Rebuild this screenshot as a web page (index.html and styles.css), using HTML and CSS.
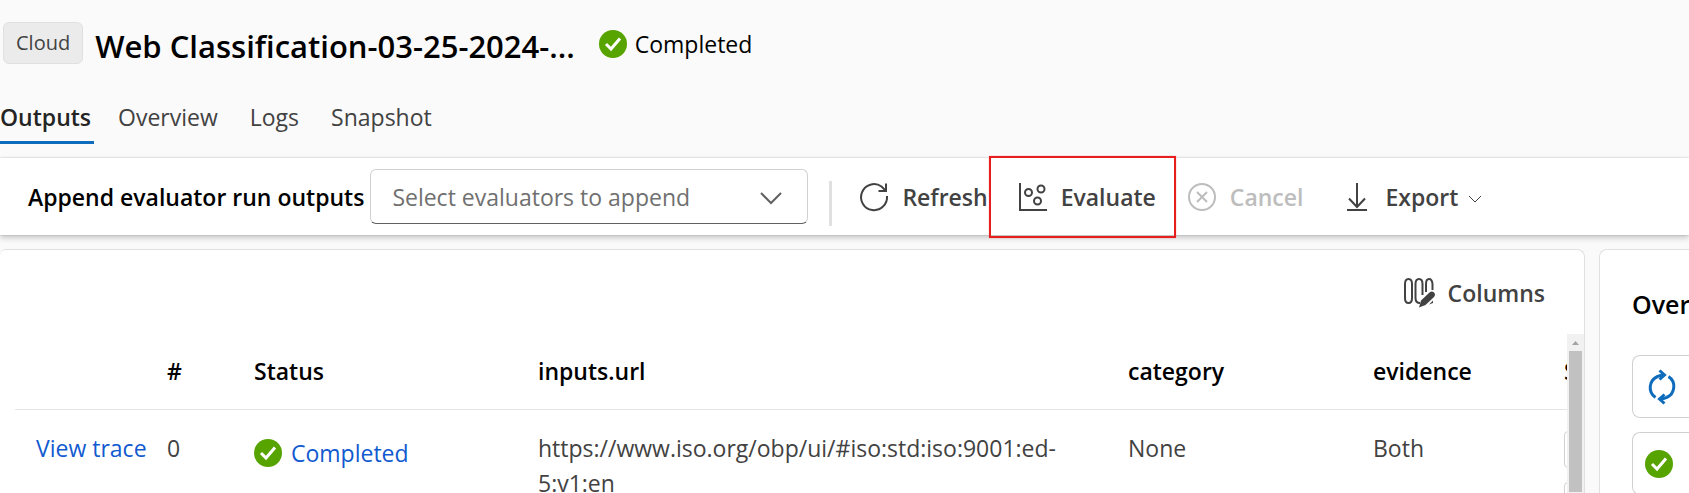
FILE: index.html
```html
<!DOCTYPE html>
<html lang="en">
<head>
<meta charset="utf-8">
<title>Web Classification run</title>
<link rel="stylesheet" href="styles.css">
</head>
<body>
<svg class="sprite" aria-hidden="true">
  <symbol id="check" viewBox="0 0 28 28">
    <circle cx="14" cy="14" r="14" fill="#57a300"/>
    <path d="M7 14 12 19 21 8.500" fill="none" stroke="#fff" stroke-width="3"/>
  </symbol>
</svg>
<div class="page">
  <header class="header">
    <span class="badge">Cloud</span>
    <h1 class="title">Web Classification-03-25-2024-...</h1>
    <span class="run-status"><svg class="icon-check"><use href="#check"/></svg>Completed</span>
  </header>

  <nav class="tabs">
    <a class="tab tab-active" href="#outputs">Outputs</a>
    <a class="tab" href="#overview">Overview</a>
    <a class="tab" href="#logs">Logs</a>
    <a class="tab" href="#snapshot">Snapshot</a>
  </nav>

  <section class="toolbar">
    <label class="toolbar-label" for="evaluators">Append evaluator run outputs</label>
    <div class="select-wrap">
      <select class="select" id="evaluators"><option>Select evaluators to append</option></select>
      <svg class="select-chevron" viewBox="0 0 22 12"><path d="M1 1 11 11 21 1"/></svg>
    </div>
    <span class="divider"></span>
    <button class="command command-refresh" type="button">
      <svg class="icon" viewBox="0 0 28 28"><path d="M27 13A13 13 0 1 1 21.500 3.500L26 8M26 .5V8H18.500"/></svg>Refresh
    </button>
    <button class="command command-evaluate" type="button">
      <svg class="icon" viewBox="0 0 28 28"><path d="M1 0V27H28"/><circle cx="9.500" cy="9.500" r="3.500"/><circle cx="22" cy="6" r="3.500"/><circle cx="18.500" cy="18" r="3.500"/></svg>Evaluate
    </button>
    <button class="command command-cancel" type="button" disabled>
      <svg class="icon" viewBox="0 0 28 28"><circle cx="14" cy="14" r="13"/><path d="M9 9 19 19M19 9 9 19"/></svg>Cancel
    </button>
    <button class="command command-export" type="button">
      <svg class="icon" viewBox="0 0 28 28"><path d="M14 0V24M6 15.500 14 24 22 15.500M4 27H24"/></svg>Export
      <svg class="icon-caret" viewBox="0 0 14 8"><path d="M1 1 7 7 13 1"/></svg>
    </button>
  </section>

  <main class="content">
    <section class="card results">
      <div class="results-tools">
        <button class="command" type="button">
          <svg class="icon-columns" viewBox="0 0 30 30">
            <path d="M1 6Q1 1 4.500 1T8 6V20Q8 25 4.500 25T1 20ZM16 25Q11.500 25 11.500 20V6Q11.500 1 15 1T18.500 6V17M22 14V6Q22 1 25 1T28.500 6V12"/>
            <path class="pen" d="M15 29.500 17 22.500 25.500 14.500Q28 12.500 30 14.500T30 19L21.500 27ZM25 26.500 29 22.500V25Z"/>
          </svg>Columns
        </button>
      </div>
      <div class="results-scroll">
        <div class="table-view">
          <table class="table">
            <colgroup>
              <col class="col-trace"><col class="col-index"><col class="col-status"><col><col class="col-category"><col class="col-evidence"><col class="col-score">
            </colgroup>
            <thead>
              <tr><th></th><th>#</th><th>Status</th><th>inputs.url</th><th>category</th><th>evidence</th><th>S</th></tr>
            </thead>
            <tbody>
              <tr>
                <td class="cell-trace"><a class="link" href="#trace">View trace</a></td>
                <td>0</td>
                <td><a class="link link-status" href="#status"><svg class="icon-check"><use href="#check"/></svg>Completed</a></td>
                <td>https://www.iso.org/obp/ui/#iso:std:iso:9001:ed-<wbr>5:v1:en</td>
                <td>None</td>
                <td>Both</td>
                <td class="cell-chips"><span class="chip"></span><span class="chip"></span></td>
              </tr>
            </tbody>
          </table>
        </div>
        <div class="scrollbar">
          <svg class="scroll-arrow" viewBox="0 0 17 17"><path d="M5 11 8.500 7 12 11Z"/></svg>
          <div class="scroll-thumb"></div>
        </div>
      </div>
    </section>

    <aside class="card side">
      <h2 class="side-title">Overview</h2>
      <div class="tile">
        <svg class="icon-sync" viewBox="0 0 28 34"><path d="M7.500 27.500A12 12 0 0 1 9.500 6.500Q12 5 16 5M20.500 6.500A12 12 0 0 1 18.500 27.500Q16 29 12 29M11.500 .5 16.500 5 11.500 9.500M16.500 24.500 11.500 29 16.500 33.500"/></svg>
      </div>
      <div class="tile"><svg class="icon-check"><use href="#check"/></svg></div>
    </aside>
  </main>
</div>
</body>
</html>
```

FILE: styles.css
```css
* { box-sizing: border-box; }

body {
  margin: 0;
  background: #fafafa;
  color: #000;
  font: 23px/32px "Open Sans", "Noto Sans", sans-serif;
}

.sprite { display: none; }

.page {
  display: flex;
  flex-direction: column;
  height: 100vh;
  overflow: hidden;
}

svg { display: block; flex: none; overflow: visible; }

.header {
  display: flex;
  align-items: flex-start;
  padding: 22px 3px 0;
}

.badge {
  padding: 4px 12px;
  border: 1px solid #e0e0e0;
  border-radius: 6px;
  background: #ebebeb;
  color: #424242;
  font-size: 20px;
}

.title {
  margin: 3px 24px 0 12px;
  font-size: 31px;
  font-weight: 600;
  line-height: 42px;
  white-space: nowrap;
}

.run-status {
  display: flex;
  align-items: center;
  gap: 8px;
  margin-top: 6px;
}

.icon-check { width: 28px; height: 28px; }

.tabs {
  display: flex;
  gap: 32px;
  margin-top: 34px;
}

.tab {
  padding-bottom: 8px;
  border-bottom: 3px solid transparent;
  color: #424242;
  text-decoration: none;
}

.tab-active {
  margin-right: -8px;
  padding-right: 3px;
  border-color: #0f6cbd;
  color: #242424;
  font-weight: 600;
}

.toolbar {
  display: flex;
  align-items: center;
  margin-top: 14px;
  padding-left: 28px;
  height: 77px;
  flex: none;
  background: #fff;
  box-shadow: 0 0 2px rgba(0, 0, 0, .2), 0 3px 6px rgba(0, 0, 0, .2);
}

.toolbar-label {
  font-weight: 600;
  white-space: nowrap;
}

.select-wrap {
  position: relative;
  width: 438px;
  margin-left: 6px;
}

.select {
  appearance: none;
  display: block;
  width: 100%;
  height: 55px;
  padding: 0 60px 0 21px;
  border: 1px solid #d1d1d1;
  border-bottom-color: #616161;
  border-radius: 6px;
  background: #fff;
  color: #707070;
  font: inherit;
}

.select-chevron {
  position: absolute;
  top: 23px;
  right: 26px;
  width: 22px;
  height: 12px;
  fill: none;
  stroke: #616161;
  stroke-width: 2;
  pointer-events: none;
}

.divider {
  align-self: flex-end;
  width: 3px;
  height: 45px;
  margin: 0 28px 9px 21px;
  background: #e0e0e0;
}

.command {
  position: relative;
  display: flex;
  align-items: center;
  gap: 14px;
  padding: 0;
  border: 0;
  background: none;
  color: #424242;
  font: inherit;
  font-weight: 600;
  white-space: nowrap;
}

.icon, .icon-caret, .icon-columns {
  fill: none;
  stroke: currentColor;
  stroke-width: 2;
}

.icon { width: 28px; height: 28px; }
.icon-caret { width: 14px; height: 8px; stroke-width: 1; margin-left: -4px; margin-top: 4px; }
.icon-columns { width: 30px; height: 30px; }
.pen { fill: currentColor; stroke: none; }

.command-evaluate {
  align-self: stretch;
  margin-left: 1px;
  padding: 0 20px 0 30px;
}

.command-evaluate::after {
  content: "";
  position: absolute;
  inset: -2px 0 -3px;
  border: 2px solid #e61e1e;
  box-shadow: 0 0 1px #f08080;
}

.command-cancel { margin-left: 12px; color: #bdbdbd; }
.command-export { margin-left: 40px; }

.content {
  display: flex;
  gap: 14px;
  flex: 1;
  min-height: 0;
  margin-top: 14px;
}

.card {
  border: 1px solid #e0e0e0;
  border-bottom: 0;
  background: #fff;
}

.results {
  display: flex;
  flex-direction: column;
  flex: 1;
  min-width: 0;
  border-left: 0;
  border-radius: 6px 8px 0 0;
}

.results-tools {
  display: flex;
  justify-content: flex-end;
  padding: 27px 39px 0 0;
}

.results-scroll {
  display: flex;
  flex: 1;
  min-height: 0;
  margin-top: 25px;
  padding-left: 15px;
}

.table-view {
  flex: 1;
  min-width: 0;
  overflow: hidden;
}

.table {
  width: 100%;
  table-layout: fixed;
  border-collapse: collapse;
  line-height: 35px;
}

.col-trace { width: 152px; }
.col-index { width: 87px; }
.col-status { width: 284px; }
.col-category { width: 245px; }
.col-evidence { width: 191px; }
.col-score { width: 3px; }

.table th {
  height: 75px;
  padding: 0;
  border-bottom: 1px solid #e5e5e5;
  font-weight: 600;
  text-align: left;
}

.table td {
  padding: 21px 0 0;
  color: #424242;
  vertical-align: top;
}

.table .cell-trace { padding-left: 21px; }

.link { color: #115ad0; text-decoration: none; }

.link-status {
  display: flex;
  align-items: center;
  gap: 9px;
  margin-top: 5px;
}

.chip {
  display: block;
  width: 60px;
  height: 37px;
  margin-bottom: 14px;
  border: 1px solid #d1d1d1;
  border-radius: 4px;
}

.scrollbar {
  display: flex;
  flex-direction: column;
  align-items: center;
  width: 17px;
  background: #f1f1f1;
}

.scroll-arrow { width: 17px; height: 17px; fill: #a3a3a3; }

.scroll-thumb {
  flex: 1;
  width: 13px;
  margin-bottom: 1px;
  background: #c1c1c1;
}

.side {
  flex: 0 0 90px;
  padding: 36px 0 0 32px;
  overflow: hidden;
  border-right: 0;
  border-radius: 8px 0 0 0;
}

.side-title {
  margin: 0 0 33px;
  font-size: 25px;
  font-weight: 600;
  line-height: 36px;
}

.tile {
  display: flex;
  align-items: center;
  height: 63px;
  margin-bottom: 14px;
  padding-left: 12px;
  border: 1px solid #d1d1d1;
  border-right: 0;
  border-radius: 8px 0 0 8px;
}

.icon-sync {
  width: 28px;
  height: 34px;
  margin-left: 3px;
  fill: none;
  stroke: #0f6cbd;
  stroke-width: 3;
}
```
